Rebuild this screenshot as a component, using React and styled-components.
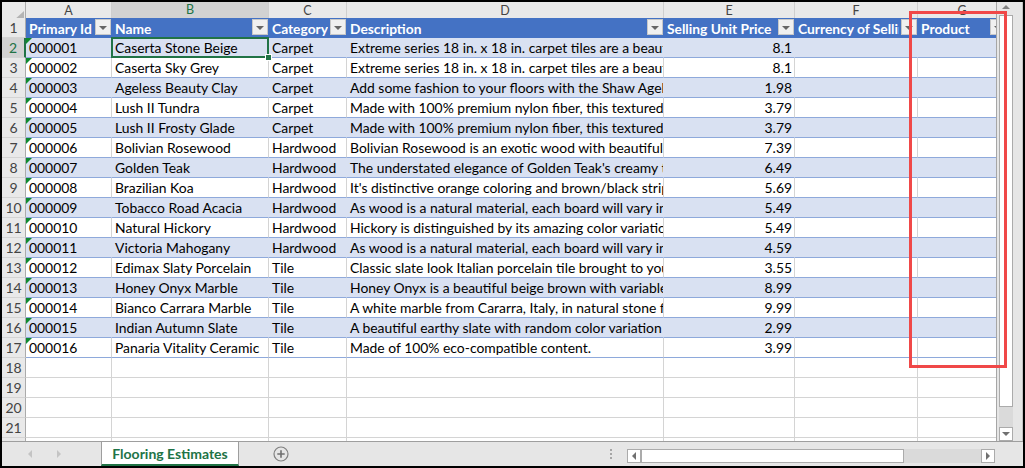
import styled, { createGlobalStyle, css } from "styled-components";

const GREEN = "#217346";
const COLS = "24px 86px 157px 78px 317px 131px 123px 89px";
const LETTERS = ["A", "B", "C", "D", "E", "F", "G"];
const HEADERS = [
  "Primary Id",
  "Name",
  "Category",
  "Description",
  "Selling Unit Price",
  "Currency of Selling Unit Price",
  "Product",
];

const ROWS = [
  ["000001", "Caserta Stone Beige", "Carpet", "Extreme series 18 in. x 18 in. carpet tiles are a beautiful choice", "8.1"],
  ["000002", "Caserta Sky Grey", "Carpet", "Extreme series 18 in. x 18 in. carpet tiles are a beautiful choice", "8.1"],
  ["000003", "Ageless Beauty Clay", "Carpet", "Add some fashion to your floors with the Shaw Ageless Beauty", "1.98"],
  ["000004", "Lush II Tundra", "Carpet", "Made with 100% premium nylon fiber, this textured carpet", "3.79"],
  ["000005", "Lush II Frosty Glade", "Carpet", "Made with 100% premium nylon fiber, this textured carpet", "3.79"],
  ["000006", "Bolivian Rosewood", "Hardwood", "Bolivian Rosewood is an exotic wood with beautiful grain", "7.39"],
  ["000007", "Golden Teak", "Hardwood", "The understated elegance of Golden Teak's creamy tones", "6.49"],
  ["000008", "Brazilian Koa", "Hardwood", "It's distinctive orange coloring and brown/black striping", "5.69"],
  ["000009", "Tobacco Road Acacia", "Hardwood", "As wood is a natural material, each board will vary in color", "5.49"],
  ["000010", "Natural Hickory", "Hardwood", "Hickory is distinguished by its amazing color variation", "5.49"],
  ["000011", "Victoria Mahogany", "Hardwood", "As wood is a natural material, each board will vary in color", "4.59"],
  ["000012", "Edimax Slaty Porcelain", "Tile", "Classic slate look Italian porcelain tile brought to you", "3.55"],
  ["000013", "Honey Onyx Marble", "Tile", "Honey Onyx is a beautiful beige brown with variable veining", "8.99"],
  ["000014", "Bianco Carrara Marble", "Tile", "A white marble from Cararra, Italy, in natural stone finish", "9.99"],
  ["000015", "Indian Autumn Slate", "Tile", "A beautiful earthy slate with random color variation", "2.99"],
  ["000016", "Panaria Vitality Ceramic", "Tile", "Made of 100% eco-compatible content.", "3.99"],
];

const GlobalStyle = createGlobalStyle`
  body {
    margin: 0;
    background: #fff;
  }
`;

const Window = styled.div`
  position: relative;
  width: 1025px;
  height: 468px;
  box-sizing: border-box;
  border: 2px solid #000;
  display: flex;
  flex-direction: column;
  overflow: hidden;
  background: #fff;
  font-family: Lato, "Open Sans", sans-serif;
`;

const Body = styled.div`
  display: flex;
  height: 439px;
  flex-shrink: 0;
`;

const Sheet = styled.div`
  width: 994px;
  overflow: hidden;
  display: flex;
  flex-direction: column;
`;

const Row = styled.div`
  display: grid;
  grid-template-columns: ${COLS};
  height: ${(p) => p.$h || 20}px;
  flex-shrink: 0;
`;

const Corner = styled.div`
  display: flex;
  align-items: flex-end;
  justify-content: flex-end;
  box-sizing: border-box;
  padding: 0 1px 3px 0;
  background: #e9e9e9;
  border-right: 1px solid #ababab;
  border-bottom: 1px solid #ababab;
  &::after {
    content: "";
    border-left: 11px solid transparent;
    border-bottom: 10px solid #b4b4b4;
  }
`;

const ColLetter = styled.div`
  display: flex;
  align-items: center;
  justify-content: center;
  box-sizing: border-box;
  padding-bottom: 6px;
  background: ${(p) => (p.$active ? "#d2d2d2" : "#e9e9e9")};
  color: ${(p) => (p.$active ? GREEN : "#444")};
  border-right: 1px solid #cfcfcf;
  border-bottom: ${(p) => (p.$active ? `2px solid ${GREEN}` : "1px solid #ababab")};
  font-size: 12.5px;
`;

const RowNum = styled.div`
  display: flex;
  align-items: center;
  justify-content: center;
  box-sizing: border-box;
  background: ${(p) => (p.$active ? "#d2d2d2" : "#e9e9e9")};
  color: ${(p) => (p.$active ? GREEN : "#444")};
  border-right: ${(p) => (p.$active ? `2px solid ${GREEN}` : "1px solid #ababab")};
  border-bottom: 1px solid #d4d4d4;
  font-size: 14px;
`;

const HeadCell = styled.div`
  display: flex;
  align-items: center;
  gap: 2px;
  box-sizing: border-box;
  padding: 0 1px 0 3px;
  background: #4472c4;
  color: #fff;
  font-weight: 700;
  font-size: 13.8px;
  overflow: hidden;
`;

const HeadText = styled.span`
  flex: 1;
  min-width: 0;
  overflow: hidden;
  white-space: nowrap;
`;

const FilterBtn = styled.div`
  flex: 0 0 16px;
  height: 16px;
  box-sizing: border-box;
  margin-bottom: 2px;
  background: #f0f0f0;
  border: 1px solid #c8c8c8;
  display: flex;
  align-items: center;
  justify-content: center;
  &::after {
    content: "";
    margin-top: 1px;
    border-left: 4px solid transparent;
    border-right: 4px solid transparent;
    border-top: 4px solid #666;
  }
`;

const Cell = styled.div`
  position: relative;
  display: flex;
  align-items: center;
  justify-content: ${(p) => (p.$num ? "flex-end" : "flex-start")};
  box-sizing: border-box;
  padding: 0 2px 0 3px;
  white-space: nowrap;
  overflow: ${(p) => (p.$selected ? "visible" : "hidden")};
  z-index: ${(p) => (p.$selected ? 2 : "auto")};
  background: ${(p) => (p.$band ? "#d9e1f2" : "#fff")};
  border-right: 1px solid ${(p) => (p.$band ? "#d9e1f2" : "#d4d4d4")};
  border-bottom: 1px solid ${(p) => (p.$table ? "#8ea9db" : "#d4d4d4")};
  color: #000;
  font-size: 13.9px;

  ${(p) =>
    p.$flag &&
    css`
      &::before {
        content: "";
        position: absolute;
        left: 0;
        top: 0;
        border-top: 6px solid #0f8a2e;
        border-right: 6px solid transparent;
      }
    `}

  ${(p) =>
    p.$selected &&
    css`
      &::before {
        content: "";
        position: absolute;
        left: -1px;
        top: -1px;
        right: -1px;
        bottom: -1px;
        border: 2px solid ${GREEN};
      }
      &::after {
        content: "";
        position: absolute;
        right: -4px;
        bottom: -4px;
        width: 5px;
        height: 5px;
        background: ${GREEN};
        border: 1px solid #fff;
      }
    `}
`;

const VScroll = styled.div`
  width: 27px;
  flex-shrink: 0;
  box-sizing: border-box;
  display: flex;
  flex-direction: column;
  padding-left: 2px;
  background: #e6e6e6;
  border-left: 1px solid #a6a6a6;
  border-right: 1px solid #c2c2c2;
`;

const Arrow = styled.span`
  width: 0;
  height: 0;
  ${(p) =>
    p.$dir === "up" &&
    css`
      border-left: 4px solid transparent;
      border-right: 4px solid transparent;
      border-bottom: 4px solid ${p.$color};
    `}
  ${(p) =>
    p.$dir === "down" &&
    css`
      border-left: 4px solid transparent;
      border-right: 4px solid transparent;
      border-top: 4px solid ${p.$color};
    `}
  ${(p) =>
    p.$dir === "left" &&
    css`
      border-top: 4px solid transparent;
      border-bottom: 4px solid transparent;
      border-right: 4px solid ${p.$color};
    `}
  ${(p) =>
    p.$dir === "right" &&
    css`
      border-top: 4px solid transparent;
      border-bottom: 4px solid transparent;
      border-left: 4px solid ${p.$color};
    `}
`;

const UpZone = styled.div`
  width: 14px;
  height: 13px;
  flex-shrink: 0;
  display: flex;
  align-items: center;
  justify-content: center;
  padding-bottom: 3px;
  box-sizing: border-box;
`;

const Thumb = styled.div`
  width: ${(p) => p.$w || 14}px;
  height: ${(p) => p.$h || 14}px;
  flex-shrink: 0;
  box-sizing: border-box;
  background: #fff;
  border: 1px solid #ababab;
`;

const Track = styled.div`
  width: ${(p) => p.$w || 14}px;
  height: ${(p) => p.$h || 14}px;
  flex-shrink: 0;
  background: #dadada;
`;

const ScrollBtn = styled.div`
  width: 14px;
  height: 14px;
  flex-shrink: 0;
  box-sizing: border-box;
  background: #fff;
  border: 1px solid #ababab;
  display: flex;
  align-items: center;
  justify-content: center;
`;

const TabBar = styled.div`
  flex: 1;
  display: flex;
  box-sizing: border-box;
  border-top: 1px solid #9e9e9e;
  background: #e6e6e6;
`;

const NavZone = styled.div`
  width: 99px;
  flex-shrink: 0;
  box-sizing: border-box;
  display: flex;
  align-items: center;
  gap: 25px;
  padding: 0 0 1px 26px;
`;

const SheetTab = styled.div`
  width: 138px;
  flex-shrink: 0;
  box-sizing: border-box;
  display: flex;
  align-items: center;
  justify-content: center;
  background: #fff;
  border-left: 1px solid #9e9e9e;
  border-right: 1px solid #9e9e9e;
  border-bottom: 2px solid ${GREEN};
  color: ${GREEN};
  font-weight: 700;
  font-size: 14px;
`;

const AddZone = styled.div`
  flex: 1;
  display: flex;
  align-items: center;
  padding-left: 34px;
`;

const Splitter = styled.div`
  width: 2px;
  margin-right: 15px;
  display: flex;
  flex-direction: column;
  justify-content: center;
  gap: 2px;
`;

const Dot = styled.span`
  width: 2px;
  height: 2px;
  background: #a6a6a6;
`;

const HScroll = styled.div`
  width: 368px;
  height: 14px;
  flex-shrink: 0;
  align-self: flex-end;
  margin-bottom: 3px;
  display: flex;
`;

const RightFill = styled.div`
  width: 28px;
  flex-shrink: 0;
`;

const RedBox = styled.div`
  position: absolute;
  left: 907px;
  top: 9px;
  width: 98px;
  height: 357px;
  box-sizing: border-box;
  border: 3px solid #f04848;
  pointer-events: none;
`;

const AddIcon = () => (
  <svg width="16" height="16" viewBox="0 0 16 16">
    <circle cx="8" cy="8" r="7" fill="none" stroke="#808080" strokeWidth="1.2" />
    <path d="M8 4.3v7.4M4.3 8h7.4" stroke="#707070" strokeWidth="1.6" />
  </svg>
);

const App = () => {
  const empty = [18, 19, 20, 21, 22];

  return (
    <>
      <GlobalStyle />
      <Window>
        <Body>
          <Sheet>
            <Row $h={16}>
              <Corner />
              {LETTERS.map((l) => (
                <ColLetter key={l} $active={l === "B"}>
                  {l}
                </ColLetter>
              ))}
            </Row>

            <Row>
              <RowNum>1</RowNum>
              {HEADERS.map((h) => (
                <HeadCell key={h}>
                  <HeadText>{h}</HeadText>
                  <FilterBtn />
                </HeadCell>
              ))}
            </Row>

            {ROWS.map((r, i) => {
              const band = i % 2 === 0;
              return (
                <Row key={r[0]}>
                  <RowNum $active={i === 0}>{i + 2}</RowNum>
                  <Cell $band={band} $table $flag>{r[0]}</Cell>
                  <Cell $band={band} $table $selected={i === 0}>{r[1]}</Cell>
                  <Cell $band={band} $table>{r[2]}</Cell>
                  <Cell $band={band} $table>{r[3]}</Cell>
                  <Cell $band={band} $table $num>{r[4]}</Cell>
                  <Cell $band={band} $table />
                  <Cell $band={band} $table />
                </Row>
              );
            })}

            {empty.map((n) => (
              <Row key={n}>
                <RowNum>{n}</RowNum>
                {LETTERS.map((l) => (
                  <Cell key={l} />
                ))}
              </Row>
            ))}
          </Sheet>

          <VScroll>
            <UpZone>
              <Arrow $dir="up" $color="#808080" />
            </UpZone>
            <Thumb $h={392} />
            <Track $h={20} />
            <ScrollBtn>
              <Arrow $dir="down" $color="#707070" />
            </ScrollBtn>
          </VScroll>
        </Body>

        <TabBar>
          <NavZone>
            <Arrow $dir="left" $color="#c4c4c4" />
            <Arrow $dir="right" $color="#c4c4c4" />
          </NavZone>
          <SheetTab>Flooring Estimates</SheetTab>
          <AddZone>
            <AddIcon />
          </AddZone>
          <Splitter>
            <Dot />
            <Dot />
            <Dot />
          </Splitter>
          <HScroll>
            <ScrollBtn>
              <Arrow $dir="left" $color="#707070" />
            </ScrollBtn>
            <Thumb $w={263} />
            <Track $w={77} />
            <ScrollBtn>
              <Arrow $dir="right" $color="#707070" />
            </ScrollBtn>
          </HScroll>
          <RightFill />
        </TabBar>

        <RedBox />
      </Window>
    </>
  );
};

export default App;
